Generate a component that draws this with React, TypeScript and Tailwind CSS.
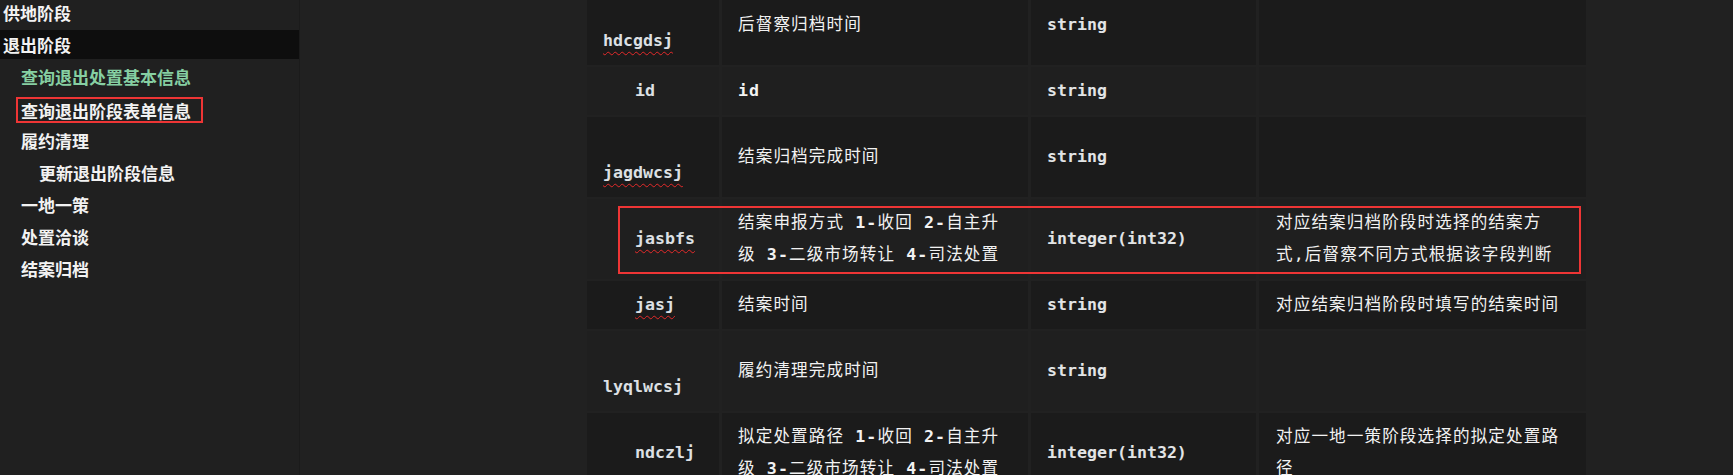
import React from "react";

type Row = {
  name: string;
  long: boolean;
  wavy: boolean;
  desc: string[];
  type: string;
  note: string[];
};

const rows: Row[] = [
  { name: "hdcgdsj", long: true, wavy: true, desc: ["后督察归档时间"], type: "string", note: [] },
  { name: "id", long: false, wavy: false, desc: ["id"], type: "string", note: [] },
  { name: "jagdwcsj", long: true, wavy: true, desc: ["结案归档完成时间"], type: "string", note: [] },
  {
    name: "jasbfs",
    long: false,
    wavy: true,
    desc: ["结案申报方式 1-收回 2-自主升", "级 3-二级市场转让 4-司法处置"],
    type: "integer(int32)",
    note: ["对应结案归档阶段时选择的结案方", "式,后督察不同方式根据该字段判断"],
  },
  { name: "jasj", long: false, wavy: true, desc: ["结案时间"], type: "string", note: ["对应结案归档阶段时填写的结案时间"] },
  { name: "lyqlwcsj", long: true, wavy: false, desc: ["履约清理完成时间"], type: "string", note: [] },
  {
    name: "ndczlj",
    long: false,
    wavy: false,
    desc: ["拟定处置路径 1-收回 2-自主升", "级 3-二级市场转让 4-司法处置"],
    type: "integer(int32)",
    note: ["对应一地一策阶段选择的拟定处置路", "径"],
  },
];

const mono = "font-['DejaVu_Sans_Mono','Noto_Sans_CJK_SC',monospace]";

function NameText({ row }: { row: Row }) {
  return (
    <span
      className={
        row.wavy
          ? "underline decoration-wavy decoration-[#e42a2a] decoration-1 underline-offset-[5px] [text-decoration-skip-ink:none]"
          : ""
      }
    >
      {row.name}
    </span>
  );
}

function MixedLine({ text }: { text: string }) {
  const parts = text.split(/([A-Za-z0-9\-]+)/);
  return (
    <div className="whitespace-pre">
      {parts.map((p, i) =>
        /^[A-Za-z0-9\-]+$/.test(p) ? (
          <span key={i} className="font-bold">
            {p}
          </span>
        ) : (
          <span key={i}>{p}</span>
        )
      )}
    </div>
  );
}

export default function App() {
  return (
    <div className="flex h-[475px] w-[1733px] overflow-hidden bg-[#212121] font-['Noto_Sans_CJK_SC',sans-serif]">
      <aside className="flex w-[300px] shrink-0 flex-col gap-[3px] border-r border-[#1b1b1b] bg-[#202020] text-[17px] font-bold text-[#f2f2f2]">
        <div className="-mt-[2px] flex h-[29px] items-center pl-[3px] leading-none">供地阶段</div>
        <div className="flex h-[29px] items-center bg-[#0e0e0e] pl-[3px] leading-none">退出阶段</div>
        <div className="flex h-[29px] items-center pl-[21px] leading-none text-[#86cfa2]">查询退出处置基本信息</div>
        <div className="flex h-[29px] items-end pl-[16px] leading-none">
          <span className="flex h-[26px] items-center border-2 border-[#ee3535] pl-[3px] pr-[10px]">查询退出阶段表单信息</span>
        </div>
        <div className="flex h-[29px] items-center pl-[21px] leading-none">履约清理</div>
        <div className="flex h-[29px] items-center pl-[39px] leading-none">更新退出阶段信息</div>
        <div className="flex h-[29px] items-center pl-[21px] leading-none">一地一策</div>
        <div className="flex h-[29px] items-center pl-[21px] leading-none">处置洽谈</div>
        <div className="flex h-[29px] items-center pl-[21px] leading-none">结案归档</div>
      </aside>

      <main className="relative flex-1 pl-[287px]">
        <div
          className={`-mt-[15px] grid w-[999px] grid-cols-[132px_306px_225px_327px] gap-x-[3px] gap-y-[2px] text-[16.6px] leading-[32px] ${mono}`}
        >
          {rows.map((row, i) => {
            const bg = i % 2 === 0 ? "bg-[#1b1b1b]" : "bg-[#1f1f1f]";
            return (
              <React.Fragment key={row.name}>
                <div className={`flex flex-col justify-center py-2 pl-4 font-bold text-[#dde0e4] ${bg}`}>
                  {row.long ? (
                    <>
                      <div className="h-8" />
                      <div>
                        <NameText row={row} />
                      </div>
                    </>
                  ) : (
                    <div className="pl-8">
                      <NameText row={row} />
                    </div>
                  )}
                </div>
                <div className={`flex flex-col justify-center py-2 pl-4 tracking-[1.1px] text-[#f2f2f2] ${bg}`}>
                  {row.desc.map((d) => (
                    <MixedLine key={d} text={d} />
                  ))}
                </div>
                <div className={`flex flex-col justify-center py-2 pl-4 font-bold text-[#e2e4e6] ${bg}`}>
                  <div>{row.type}</div>
                </div>
                <div className={`flex flex-col justify-center py-2 pl-[17px] tracking-[1.1px] text-[#f2f2f2] ${bg}`}>
                  {row.note.map((d) => (
                    <div key={d} className="whitespace-pre">
                      {d}
                    </div>
                  ))}
                </div>
              </React.Fragment>
            );
          })}
        </div>
        <div className="pointer-events-none absolute left-[318px] top-[205.5px] h-[68.5px] w-[963px] border-2 border-[#ee3535]" />
      </main>
    </div>
  );
}
